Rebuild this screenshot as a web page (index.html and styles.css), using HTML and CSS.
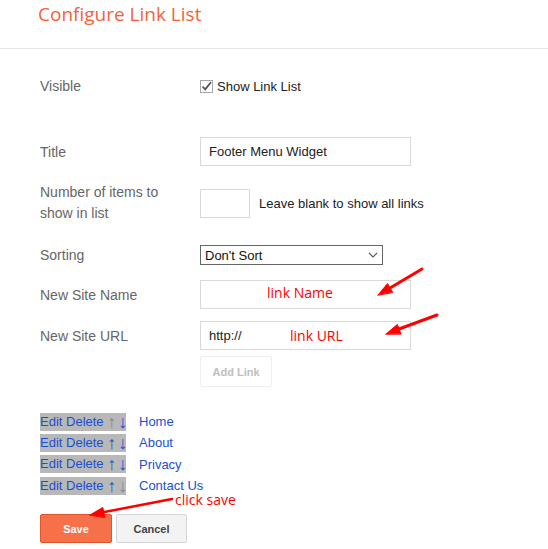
FILE: index.html
```html
<!DOCTYPE html>
<html>
<head>
<meta charset="utf-8">
<link rel="stylesheet" href="styles.css">
</head>
<body>
<div class="page">
  <div class="header"><h1 class="title">Configure Link List</h1></div>
  <div class="form">
    <div class="row row-visible">
      <div class="label">Visible</div>
      <div class="field">
        <span class="checkbox"><svg width="11" height="11" viewBox="0 0 11 11"><path d="M1.5 5.5 L4.2 8.3 L10 1.2" fill="none" stroke="#555" stroke-width="1.8"/></svg></span>
        <span class="check-text">Show Link List</span>
      </div>
    </div>
    <div class="row row-title">
      <div class="label">Title</div>
      <div class="field"><div class="input input-wide">Footer Menu Widget</div></div>
    </div>
    <div class="row row-number">
      <div class="label label-two">Number of items to<br>show in list</div>
      <div class="field"><div class="input input-small"></div><span class="hint">Leave blank to show all links</span></div>
    </div>
    <div class="row row-sort">
      <div class="label">Sorting</div>
      <div class="field"><div class="select"><span>Don't Sort</span><svg width="10" height="6" viewBox="0 0 10 6"><path d="M1 1 L5 5 L9 1" fill="none" stroke="#555" stroke-width="1.1"/></svg></div></div>
    </div>
    <div class="row row-name">
      <div class="label">New Site Name</div>
      <div class="field"><div class="input input-wide"></div></div>
    </div>
    <div class="row row-url">
      <div class="label">New Site URL</div>
      <div class="field"><div class="input input-wide">http://</div></div>
    </div>
    <div class="row row-add">
      <div class="label"></div>
      <div class="field"><span class="btn-add">Add Link</span></div>
    </div>
  </div>

  <div class="links">
    <div class="link-row"><span class="ops">Edit Delete <span class="arr dis">↑</span><span class="arr arr-down">↓</span></span><span class="name">Home</span></div>
    <div class="link-row"><span class="ops">Edit Delete <span class="arr">↑</span><span class="arr arr-down">↓</span></span><span class="name">About</span></div>
    <div class="link-row"><span class="ops">Edit Delete <span class="arr">↑</span><span class="arr arr-down">↓</span></span><span class="name">Privacy</span></div>
    <div class="link-row"><span class="ops">Edit Delete <span class="arr">↑</span><span class="arr arr-down dis">↓</span></span><span class="name">Contact Us</span></div>
  </div>

  <div class="buttons">
    <span class="btn btn-save">Save</span>
    <span class="btn btn-cancel">Cancel</span>
  </div>

  <div class="notes">
    <svg class="arrows" width="548" height="549" viewBox="0 0 548 549">
      <g fill="#f00" stroke="#f00" stroke-linecap="round">
        <line x1="422" y1="269" x2="390" y2="288" stroke-width="3"/>
        <polygon points="378,295 387.5,283.6 392.6,292.2" stroke-width="1"/>
        <line x1="437" y1="315" x2="399" y2="329" stroke-width="3"/>
        <polygon points="386,334 397.4,324.4 400.9,333.8" stroke-width="1"/>
        <line x1="172" y1="499" x2="103" y2="512.3" stroke-width="2.5"/>
        <polygon points="90,515 102.8,507.4 104.7,517.2" stroke-width="1"/>
      </g>
    </svg>
    <span class="note note-name">link Name</span>
    <span class="note note-url">link URL</span>
    <span class="note note-save">click save</span>
  </div>
</div>
</body>
</html>
```
FILE: styles.css
```css
html, body { margin: 0; padding: 0; background: #fff; }
body { font-family: "Liberation Sans", Arial, sans-serif; }
.page { position: relative; width: 548px; height: 549px; overflow: hidden; }

.header { height: 48px; border-bottom: 1px solid #e5e5e5; padding-left: 38px; }
.title { margin: 0; padding-top: 4px; font-family: "Open Sans", sans-serif; font-weight: 400; font-size: 19px; line-height: 20px; color: #f2633a; }

.form { padding-left: 40px; display: flex; flex-direction: column; }
.row { display: grid; grid-template-columns: 160px 1fr; align-items: center; }
.label { font-size: 14px; color: #666; }
.label-two { line-height: 21px; }
.field { display: flex; align-items: center; font-size: 13px; color: #222; }

.row-visible { margin-top: 28px; height: 18px; }
.row-title { margin-top: 42px; height: 29px; }
.row-number { margin-top: 16px; height: 42px; }
.row-sort { margin-top: 21px; height: 20px; }
.row-name { margin-top: 15px; height: 29px; }
.row-url { margin-top: 12px; height: 29px; }
.row-add { margin-top: 6px; height: 31px; }

.checkbox { width: 13px; height: 13px; box-sizing: border-box; border: 1px solid #a8a8a8; display: flex; align-items: center; justify-content: center; }
.check-text { margin-left: 4px; color: #222; }

.input { box-sizing: border-box; height: 29px; border: 1px solid #d9d9d9; padding-left: 8px; display: flex; align-items: center; font-size: 13px; color: #222; }
.input-wide { width: 211px; }
.input-small { width: 50px; }
.hint { margin-left: 9px; }

.select { box-sizing: border-box; width: 183px; height: 20px; border: 1px solid #666; padding: 0 4px 0 4px; display: flex; align-items: center; justify-content: space-between; font-size: 13px; color: #111; }

.btn-add { box-sizing: border-box; width: 72px; height: 31px; border: 1px solid #eee; border-radius: 2px; display: flex; align-items: center; justify-content: center; font-size: 11px; font-weight: bold; color: #c0c0c0; }

.links { margin-top: 24px; padding-left: 40px; font-size: 13px; }
.link-row { height: 21.33px; display: flex; align-items: center; gap: 13px; }
.ops { display: inline-flex; align-items: center; width: 86px; line-height: 18px; height: 18px; overflow: hidden; background: #b8b8b8; color: #1a4fd6; white-space: pre; }
.arr { display: inline-block; width: 7px; height: 18px; line-height: 18px; text-align: center; font-family: "Liberation Sans", sans-serif; font-size: 18px; }
.arr-down { margin-left: 4px; }
.dis { color: #858585; }
.name { color: #1a4fd6; }

.buttons { margin-top: 18px; padding-left: 40px; display: flex; gap: 4px; }
.btn { box-sizing: border-box; height: 29px; display: flex; align-items: center; justify-content: center; font-size: 11px; font-weight: bold; border-radius: 2px; }
.btn-save { width: 72px; background: #f6714a; border: 1px solid #e0542c; color: #fff; }
.btn-cancel { width: 71px; background: #f3f3f3; border: 1px solid #d6d6d6; color: #444; }

.notes { position: absolute; left: 0; top: 0; width: 548px; height: 549px; pointer-events: none; }
.arrows { position: absolute; left: 0; top: 0; }
.note { position: absolute; font-family: "Open Sans", sans-serif; font-size: 14px; line-height: 14px; color: #f00; white-space: nowrap; }
.note-name { left: 267px; top: 286px; }
.note-url { left: 290px; top: 329px; }
.note-save { left: 175px; top: 493px; }
```
